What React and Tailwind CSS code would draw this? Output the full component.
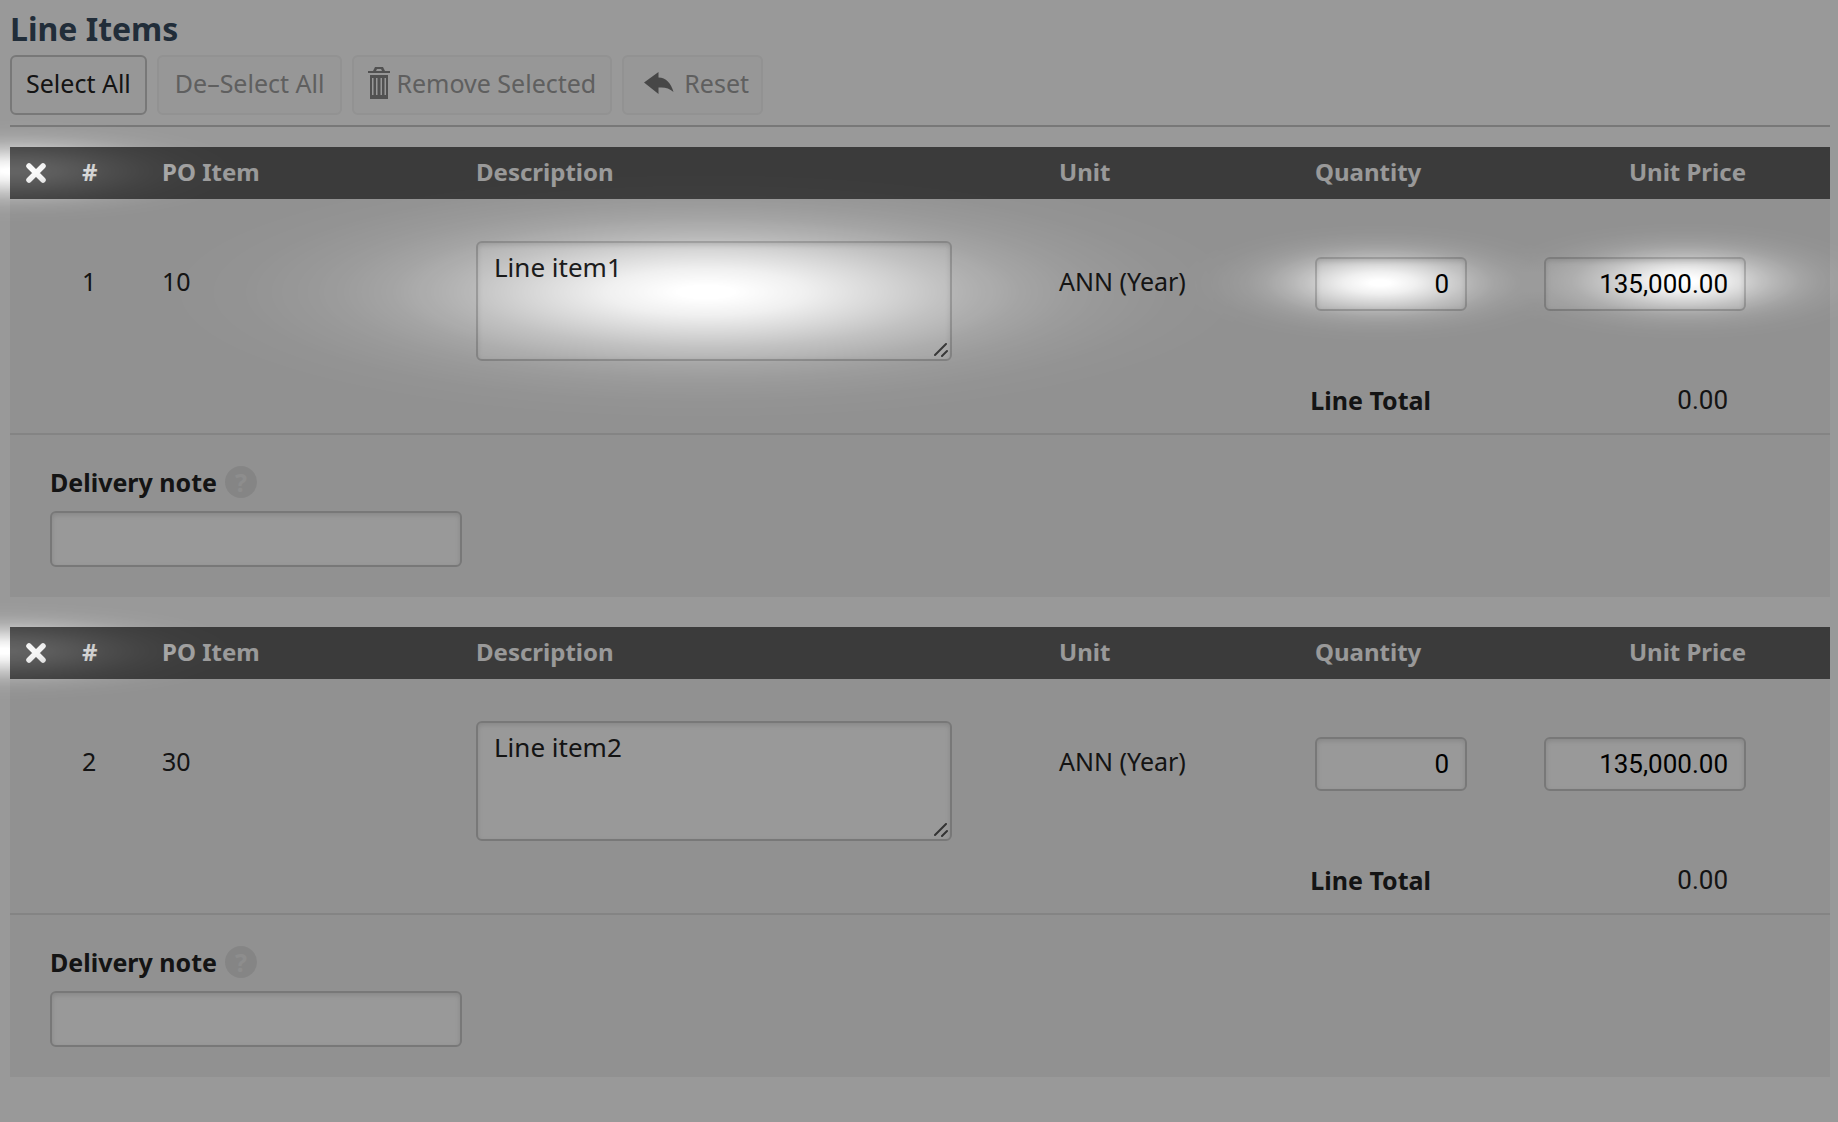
const items = [
  { id: 1, po: "10", description: "Line item1", unit: "ANN (Year)", quantity: "0", price: "135,000.00", total: "0.00" },
  { id: 2, po: "30", description: "Line item2", unit: "ANN (Year)", quantity: "0", price: "135,000.00", total: "0.00" },
];

const field =
  "rounded-md border-2 border-[#c8c8c8] bg-white shadow-[inset_0_2px_5px_rgba(0,0,0,0.12)] outline-none";
const numberField = field + ' block h-[54px] px-4 text-right font-["Roboto",sans-serif] text-[26px]/8 text-black';
const quietButton =
  "flex h-[60px] items-center rounded-md border-2 border-[#f3f3f3] bg-[#fcfcfc] pb-1 text-[#9e9e9e]";

// Falloff of one spotlight, from clear at its centre to full shade at its rim.
const falloff =
  "transparent 5%, rgba(0,0,0,.15) 18%, rgba(0,0,0,.38) 31%, rgba(0,0,0,.6) 43%, rgba(0,0,0,.8) 57%, rgba(0,0,0,.92) 71%, rgba(0,0,0,.98) 85%, #000 100%";

const spots = [
  ["550px 130px", "706px 292px"],
  ["200px 60px", "calc(100% - 458px) 283px"],
  ["200px 60px", "calc(100% - 152px) 281px"],
  ["240px 52px", "14px 171px"],
  ["250px 50px", "4px 651px"],
];

const shade = spots.map(([size, at]) => `radial-gradient(${size} at ${at}, ${falloff})`).join(", ");

function TrashIcon() {
  return (
    <svg viewBox="0 0 22 32" className="h-8 w-[22px]" fill="#888" aria-hidden="true">
      <path d="M0 4h5l2-4h8l2 4h5v2H0z M8 4h6l-1-2H9z" fillRule="evenodd" />
      <path fillRule="evenodd" d="M2 8h18v24H2z M4 11v17h1.500V11z M8 11v17h1.500V11z M12.500 11v17H14V11z M16.500 11v17H18V11z" />
    </svg>
  );
}

function ReplyIcon() {
  return (
    <svg viewBox="0 0 30 22" className="h-[22px] w-[30px]" fill="#777" aria-hidden="true">
      <path d="M0 10.500 14.500 0v5.500C22 5.500 27 11 29.500 20 25 16 21 15 14.500 15.500V22z" />
    </svg>
  );
}

function CrossIcon() {
  return (
    <svg viewBox="0 0 22 22" className="size-[22px]" stroke="#fff" strokeWidth="5.500" strokeLinecap="round" aria-hidden="true">
      <path d="M4 4 18 18M18 4 4 18" />
    </svg>
  );
}

function LineItem({ item }) {
  return (
    <section className="mb-[30px] bg-[#f2f2f2]">
      <table className="w-full table-fixed border-collapse text-left">
        <colgroup>
          <col className="w-[52px]" />
          <col className="w-[100px]" />
          <col className="w-[314px]" />
          <col />
          <col className="w-64" />
          <col className="w-[152px]" />
          <col className="w-[279px]" />
          <col className="w-[84px]" />
        </colgroup>
        <thead className="bg-[#636363] text-2xl text-white">
          <tr className="h-[52px]">
            <th className="pl-[15px]">
              <button type="button" aria-label={`Select line ${item.id}`} className="block">
                <CrossIcon />
              </button>
            </th>
            <th className="pb-0.5 pl-5">#</th>
            <th className="pb-0.5">PO Item</th>
            <th className="pb-0.5">Description</th>
            <th className="pb-0.5">Unit</th>
            <th className="pb-0.5">Quantity</th>
            <th className="pb-0.5 text-right">Unit Price</th>
            <td></td>
          </tr>
        </thead>
        <tbody className="align-top">
          <tr>
            <td></td>
            <td className="pt-[66px] pl-5">{item.id}</td>
            <td className="pt-[66px]">{item.po}</td>
            <td className="pt-[42px]">
              <div className="relative w-[476px] max-w-full">
                <textarea
                  aria-label={`Description of line ${item.id}`}
                  defaultValue={item.description}
                  className={field + " block h-[120px] w-full resize-none px-4 py-2 text-[26px]/8"}
                />
                <svg viewBox="0 0 14 14" className="absolute right-1 bottom-1 size-3.5" stroke="#555" strokeWidth="2" strokeLinecap="round" aria-hidden="true">
                  <path d="M1 12 12 1M8 13l5-5" />
                </svg>
              </div>
            </td>
            <td className="pt-[66px]">{item.unit}</td>
            <td className="pt-[58px]">
              <input aria-label={`Quantity of line ${item.id}`} defaultValue={item.quantity} className={numberField + " w-full"} />
            </td>
            <td className="pt-[58px]">
              <input aria-label={`Unit price of line ${item.id}`} defaultValue={item.price} className={numberField + " ml-auto w-[202px]"} />
            </td>
            <td></td>
          </tr>
          <tr className="h-[73px] border-b-2 border-[#dcdcdc]">
            <td colSpan={4}></td>
            <th colSpan={2} className="pt-[23px] pr-9 text-right">
              Line Total
            </th>
            <td className='pt-[23px] pr-[18px] text-right font-["Roboto",sans-serif] text-[26px]/8'>{item.total}</td>
            <td></td>
          </tr>
        </tbody>
      </table>
      <div className="px-10 pt-[31px] pb-[30px]">
        <div className="flex h-8 items-center gap-2">
          <label htmlFor={`note-${item.id}`} className="font-bold">
            Delivery note
          </label>
          <button type="button" aria-label="Help" className="flex size-8 items-center justify-center rounded-full bg-[#dedede] font-bold text-[#ececec]">
            ?
          </button>
        </div>
        <input id={`note-${item.id}`} className={field + " mt-[13px] block h-14 w-[412px] max-w-full px-4"} />
      </div>
    </section>
  );
}

export default function App() {
  return (
    <main className={'relative min-h-screen overflow-hidden bg-white pr-2 pb-2.5 pl-2.5 text-[25px]/8 text-[#222] font-["Noto_Sans",sans-serif]'}>
      <h1 className="pt-1.5 text-[32px]/[45px] font-bold text-[#384b60]">Line Items</h1>
      <div className="mb-5 flex flex-wrap gap-2.5 border-b-2 border-[#c8c8c8] pt-1 pb-2.5">
        <button type="button" className="flex h-[60px] items-center rounded-md border-2 border-[#c8c8c8] bg-[#fcfcfc] px-3.5 pb-1">
          Select All
        </button>
        <button type="button" disabled className={quietButton + " px-4"}>
          De–Select All
        </button>
        <button type="button" disabled className={quietButton + " gap-1.5 px-3.5"}>
          <TrashIcon />
          Remove Selected
        </button>
        <button type="button" disabled className={quietButton + " gap-2.5 pr-3 pl-5"}>
          <ReplyIcon />
          Reset
        </button>
      </div>
      {items.map((item) => (
        <LineItem key={item.id} item={item} />
      ))}
      <div
        className="pointer-events-none absolute inset-0 bg-black/40"
        style={{ maskImage: shade, maskComposite: "intersect" }}
      />
    </main>
  );
}
